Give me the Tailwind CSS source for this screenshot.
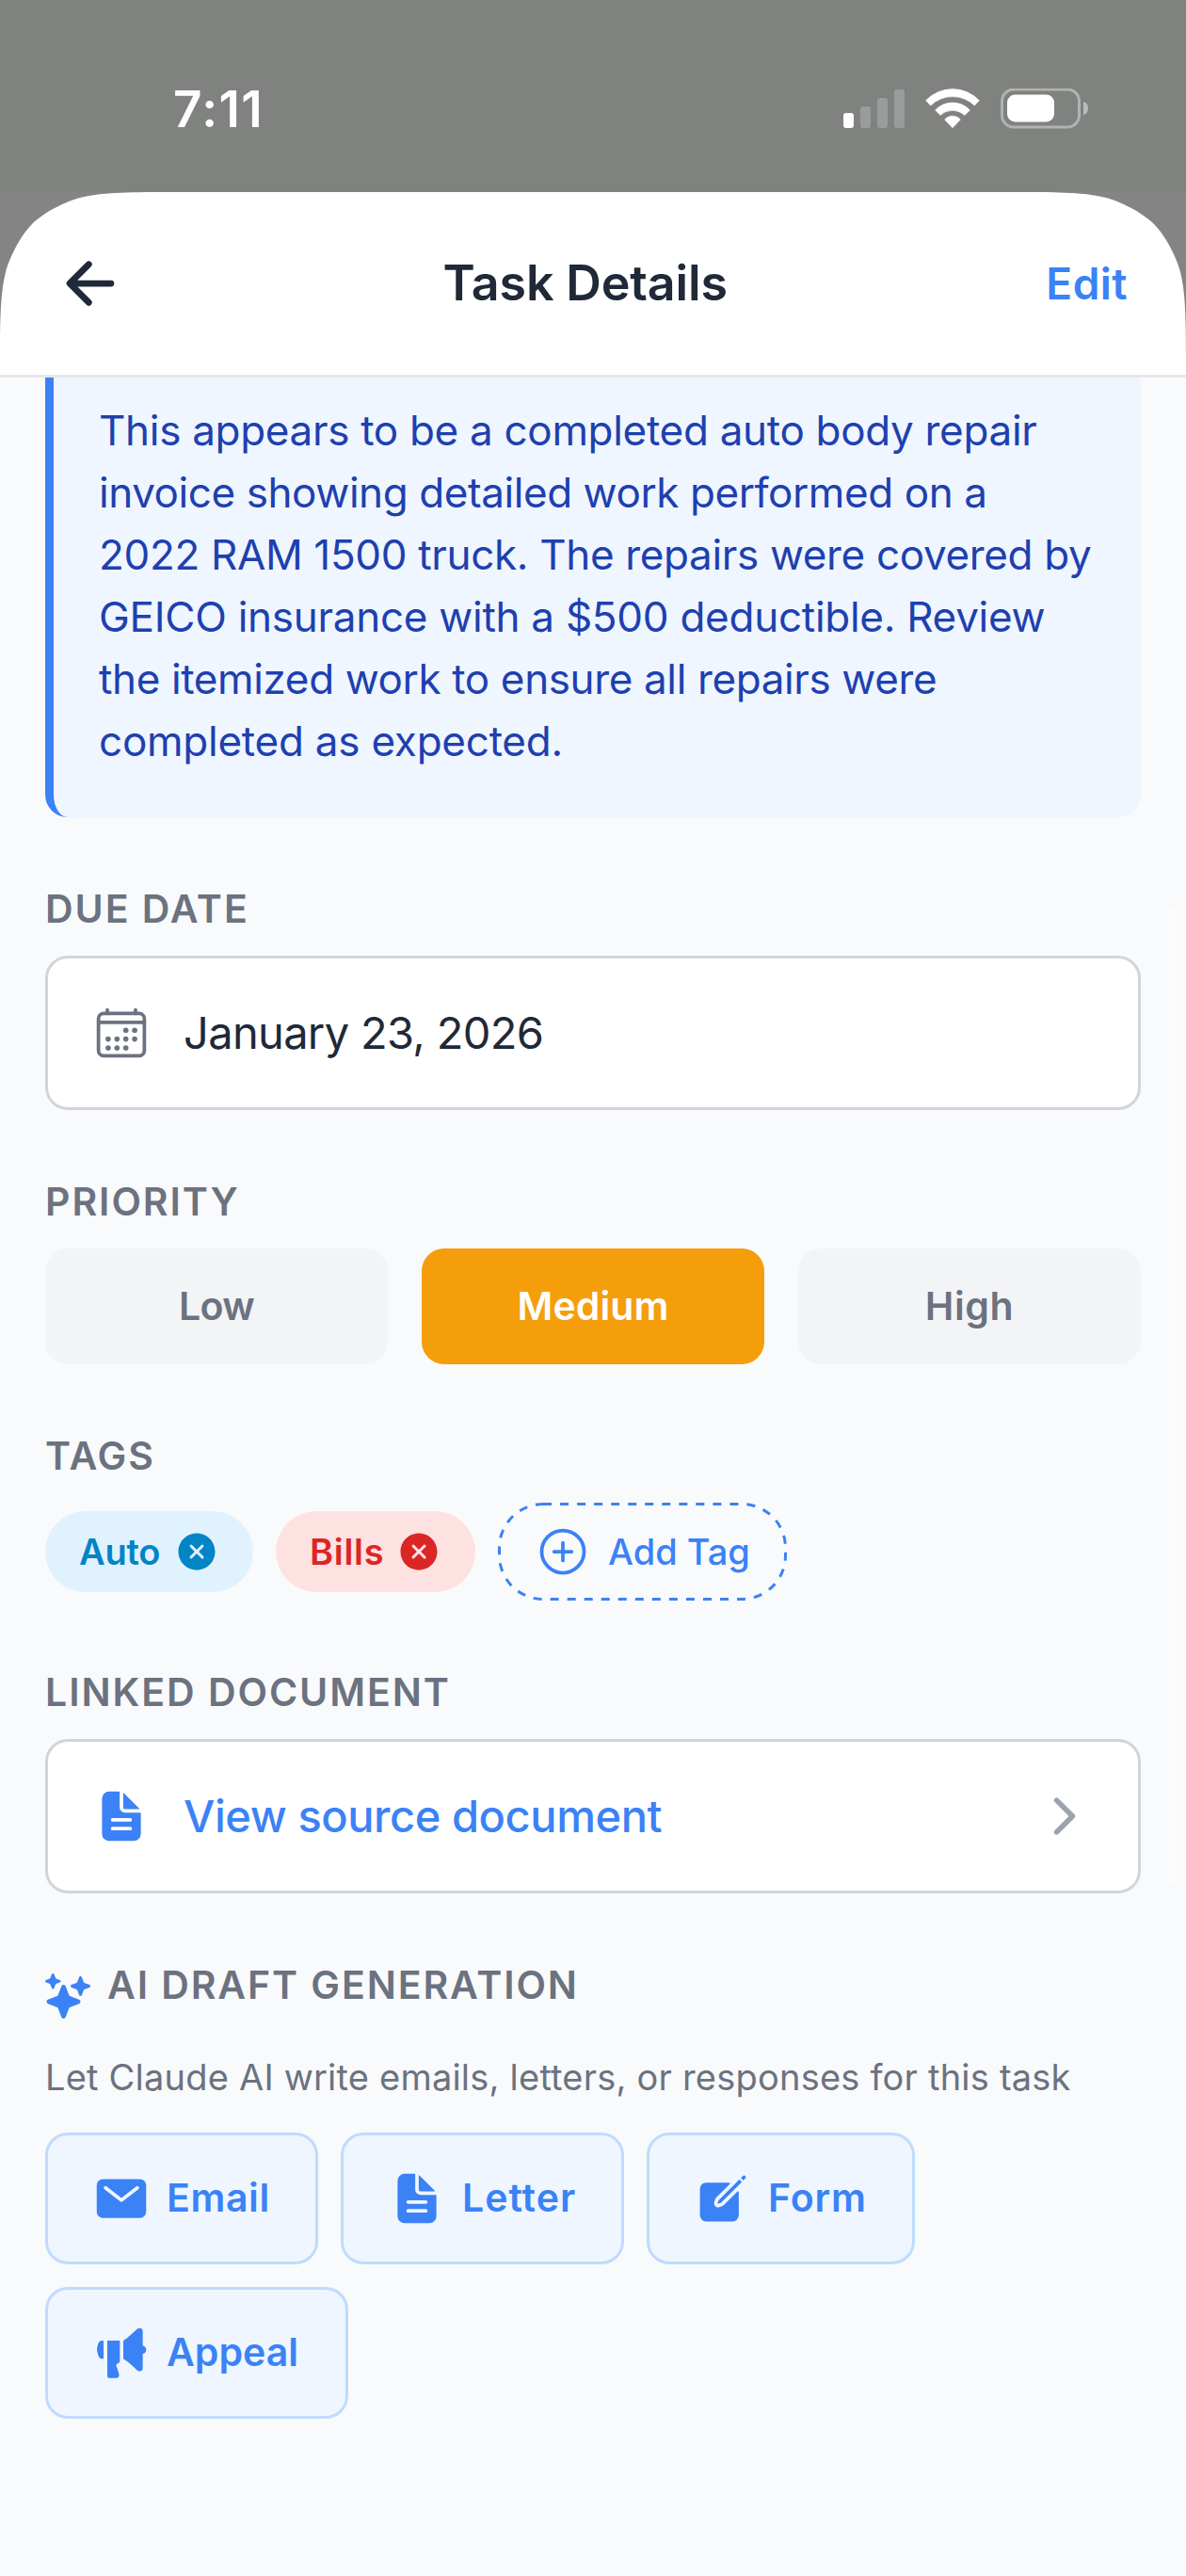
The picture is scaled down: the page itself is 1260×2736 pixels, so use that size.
<!DOCTYPE html>
<html lang="en">
<head>
  <meta charset="UTF-8" />
  <title>Task Details</title>
  <meta name="viewport" content="width=device-width, initial-scale=1.0" />
  <script src="https://cdn.jsdelivr.net/npm/@tailwindcss/browser@4"></script>
</head>
<body class="bg-[#858484] font-['Inter',sans-serif] text-[#1f2937]">

<main class="relative w-[1260px] h-[2736px] flex flex-col overflow-hidden">

  <!-- Status bar -->
  <div class="h-[204px] shrink-0 bg-[#80827f] pl-[184px] pr-[102px] pt-14 flex items-center justify-between">
    <span class="h-[88px] -mt-7 leading-[88px] text-[53px] font-semibold tracking-[1.4px] text-white">7:11</span>

    <div class="h-11 -mt-7 flex items-center">
      <svg class="w-[66px] h-11" viewBox="0 0 66 44">
        <rect x="0" y="26" width="11" height="16" rx="3" fill="#fff" />
        <rect x="18" y="19" width="11" height="23" rx="3" fill="#9a9c9b" />
        <rect x="36" y="10" width="11" height="32" rx="3" fill="#9a9c9b" />
        <rect x="54" y="1" width="11" height="41" rx="3" fill="#9a9c9b" />
      </svg>
      <svg class="w-15 h-11 ml-5" viewBox="289 39 180 132" fill="#fff" stroke="#fff" stroke-width="2" stroke-linejoin="round">
        <path d="M294 77A118 118 0 0 1 464 77L449 93A101 101 0 0 0 309 93Z" />
        <path d="M324 108A75 75 0 0 1 434 108L418 124A58 58 0 0 0 340 124Z" />
        <path d="M354 138A33 33 0 0 1 404 138L379 164Z" />
      </svg>
      <svg class="w-[95px] h-11 ml-[21px]" viewBox="0 0 95 44">
        <rect x="1.5" y="1" width="82" height="40" rx="12.5" fill="none" stroke="#b1b3b2" stroke-width="3" />
        <rect x="7" y="6.500" width="50" height="29" rx="8.5" fill="#fff" />
        <path d="M88 14c3.500.8 5 3.800 5 7s-1.500 6.200-5 7z" fill="#b9bbba" />
      </svg>
    </div>
  </div>

  <!-- Sheet header -->
  <header class="relative h-[197px] shrink-0 bg-white border-b-3 border-gray-200 px-15 flex items-center justify-between">
    <!-- Corners -->
    <svg class="absolute left-0 top-0 size-[174px]" viewBox="0 0 174 174" fill="#858484">
      <path d="M0 0H172C125 0 103 1.500 85 6C71 9.500 47 21 34 34C21 47 9.500 71 6 85C1.500 103 0 125 0 172Z" />
    </svg>
    <svg class="absolute right-0 top-0 size-[174px] -scale-x-100" viewBox="0 0 174 174" fill="#858484">
      <path d="M0 0H172C125 0 103 1.500 85 6C71 9.500 47 21 34 34C21 47 9.500 71 6 85C1.500 103 0 125 0 172Z" />
    </svg>

    <svg class="size-18" viewBox="0 0 512 512" fill="none" stroke="#1f2937" stroke-width="48" stroke-linecap="round" stroke-linejoin="round">
      <path d="M244 400L100 256l144-144M120 256h292" />
    </svg>
    <h1 class="text-[52px] font-semibold tracking-[-0.15px]">Task Details</h1>
    <button class="mr-0.5 text-[46px] font-semibold tracking-[0.45px] text-[#3b82f6]">Edit</button>
  </header>

  <!-- Content -->
  <div class="flex-1 bg-[#f9fafb] px-12 flex flex-col">

    <!-- Summary -->
    <p class="h-[467px] bg-[#eff6ff] border-l-9 border-[#3b82f6] rounded-b-3xl pl-12 pt-[23px] text-[44px] leading-[66px] text-[#1e40af] whitespace-nowrap">
      <span class="tracking-[-0.31px]">This appears to be a completed auto body repair</span><br />
      <span class="tracking-[-0.42px]">invoice showing detailed work performed on a</span><br />
      <span class="tracking-[-0.34px]">2022 RAM 1500 truck. The repairs were covered by</span><br />
      <span class="tracking-[-0.27px]">GEICO insurance with a $500 deductible. Review</span><br />
      <span class="tracking-[-0.37px]">the itemized work to ensure all repairs were</span><br />
      <span class="tracking-[-0.24px]">completed as expected.</span>
    </p>

    <!-- Due date -->
    <section class="mt-18">
      <h2 class="mb-6 text-[41px] leading-[51px] font-semibold tracking-[1.95px] text-[#6b7280]">DUE DATE</h2>
      <div class="h-[164px] bg-white border-3 border-[#d1d5db] rounded-3xl px-12 flex items-center">
        <svg class="size-15" viewBox="0 0 512 512" fill="#6b7280">
          <g fill="none" stroke="#6b7280" stroke-width="32" stroke-linecap="round" stroke-linejoin="round">
            <rect x="48" y="80" width="416" height="384" rx="48" />
            <path d="M128 48v32M384 48v32M464 160H48" />
          </g>
          <circle cx="296" cy="232" r="24" />
          <circle cx="376" cy="232" r="24" />
          <circle cx="136" cy="312" r="24" />
          <circle cx="216" cy="312" r="24" />
          <circle cx="296" cy="312" r="24" />
          <circle cx="376" cy="312" r="24" />
          <circle cx="136" cy="392" r="24" />
          <circle cx="216" cy="392" r="24" />
          <circle cx="296" cy="392" r="24" />
        </svg>
        <span class="ml-9 text-[47px] tracking-[-0.66px]">January 23, 2026</span>
      </div>
    </section>

    <!-- Priority -->
    <section class="mt-18">
      <h2 class="mb-6 text-[41px] leading-[51px] font-semibold tracking-[1.95px] text-[#6b7280]">PRIORITY</h2>
      <div class="grid grid-cols-3 gap-9 text-[41px] font-semibold">
        <button class="h-[123px] rounded-3xl bg-[#f3f4f6] text-[#6b7280] tracking-[-0.7px]">Low</button>
        <button class="h-[123px] rounded-3xl bg-[#f59e0b] text-white tracking-[0.1px]">Medium</button>
        <button class="h-[123px] rounded-3xl bg-[#f3f4f6] text-[#6b7280] tracking-[0.6px]">High</button>
      </div>
    </section>

    <!-- Tags -->
    <section class="mt-18">
      <h2 class="mb-6 text-[41px] leading-[51px] font-semibold tracking-[1.95px] text-[#6b7280]">TAGS</h2>
      <div class="h-26 flex items-center gap-6">
        <div class="w-[221px] h-[86px] rounded-[43px] bg-[#e0f2fe] text-[#0284c7] px-9 flex items-center justify-between">
          <span class="text-[38px] font-semibold tracking-[-0.2px]">Auto</span>
          <svg class="size-12" viewBox="0 0 512 512" fill="currentColor">
            <path d="M256 48C141.310 48 48 141.310 48 256s93.310 208 208 208 208-93.310 208-208S370.690 48 256 48zm75.310 260.690a16 16 0 11-22.620 22.620L256 278.630l-52.690 52.680a16 16 0 01-22.620-22.620L233.370 256l-52.680-52.690a16 16 0 0122.620-22.620L256 233.370l52.690-52.680a16 16 0 0122.620 22.620L278.630 256z" />
          </svg>
        </div>
        <div class="w-[212px] h-[86px] rounded-[43px] bg-[#fee2e2] text-[#dc2626] px-9 flex items-center justify-between">
          <span class="text-[38px] font-semibold tracking-[0.7px]">Bills</span>
          <svg class="size-12" viewBox="0 0 512 512" fill="currentColor">
            <path d="M256 48C141.310 48 48 141.310 48 256s93.310 208 208 208 208-93.310 208-208S370.690 48 256 48zm75.310 260.690a16 16 0 11-22.620 22.620L256 278.630l-52.690 52.680a16 16 0 01-22.620-22.620L233.370 256l-52.680-52.690a16 16 0 0122.620-22.620L256 233.370l52.690-52.680a16 16 0 0122.620 22.620L278.630 256z" />
          </svg>
        </div>
        <button class="relative w-[307px] h-26 pl-[39px] flex items-center text-[#3b82f6]">
          <svg class="absolute inset-0 w-[307px] h-26" viewBox="0 0 307 104" fill="none" stroke="currentColor" stroke-width="3">
            <rect x="1.500" y="1.500" width="304" height="101" rx="46.500" stroke-dasharray="9 9.040" />
          </svg>
          <svg class="size-15" viewBox="0 0 512 512" fill="none" stroke="currentColor" stroke-width="32" stroke-linecap="round" stroke-linejoin="round">
            <path stroke-miterlimit="10" d="M448 256c0-106-86-192-192-192S64 150 64 256s86 192 192 192 192-86 192-192z" />
            <path d="M256 176v160M336 256H176" />
          </svg>
          <span class="ml-[18px] text-[38px] font-medium">Add Tag</span>
        </button>
      </div>
    </section>

    <!-- Linked document -->
    <section class="mt-18">
      <h2 class="mb-6 text-[41px] leading-[51px] font-semibold tracking-[1.95px] text-[#6b7280]">LINKED DOCUMENT</h2>
      <div class="h-[164px] bg-white border-3 border-[#d1d5db] rounded-3xl px-12 flex items-center">
        <svg class="size-15" viewBox="0 0 512 512" fill="#3b82f6">
          <path d="M428 224H288a48 48 0 01-48-48V36a4 4 0 00-4-4h-92a64 64 0 00-64 64v320a64 64 0 0064 64h224a64 64 0 0064-64V228a4 4 0 00-4-4zm-92 160H176a16 16 0 010-32h160a16 16 0 010 32zm0-80H176a16 16 0 010-32h160a16 16 0 010 32z" />
          <path d="M419.220 188.590L275.410 44.780a2 2 0 00-3.410 1.410V176a16 16 0 0016 16h129.810a2 2 0 001.410-3.410z" />
        </svg>
        <span class="ml-9 flex-1 text-[47px] font-medium tracking-[-0.42px] text-[#3b82f6]">View source document</span>
        <svg class="size-15" viewBox="0 0 512 512" fill="none" stroke="#9ca3af" stroke-width="48" stroke-linecap="round" stroke-linejoin="round">
          <path d="M184 112l144 144-144 144" />
        </svg>
      </div>
    </section>

    <!-- AI drafts -->
    <section class="mt-18">
      <div class="flex items-center gap-[18px]">
        <svg class="size-12 -mt-0.5" viewBox="0 0 512 512" fill="#3b82f6">
          <path d="M208 512a24.840 24.840 0 01-23.340-16l-39.840-103.600a16.060 16.060 0 00-9.190-9.190L32 343.340a25 25 0 010-46.680l103.600-39.840a16.060 16.060 0 009.190-9.190L184.660 144a25 25 0 0146.680 0l39.840 103.600a16.060 16.060 0 009.190 9.190l103 39.630a25.490 25.490 0 0116.630 24.100 24.820 24.820 0 01-16 22.820l-103.600 39.840a16.060 16.060 0 00-9.190 9.190L231.340 496A24.840 24.840 0 01208 512z" />
          <path d="M88 176a14.670 14.670 0 01-13.690-9.400l-16.860-43.840a7.280 7.280 0 00-4.210-4.210L9.400 101.690a14.670 14.670 0 010-27.380l43.840-16.860a7.310 7.310 0 004.210-4.210L74.160 9.790A15 15 0 0186.230.110a14.670 14.670 0 0115.460 9.290l16.860 43.840a7.310 7.310 0 004.210 4.210l43.840 16.860a14.670 14.670 0 010 27.380l-43.840 16.860a7.280 7.280 0 00-4.210 4.210l-16.860 43.840A14.670 14.670 0 0188 176z" />
          <path d="M400 256a16 16 0 01-14.930-10.260l-22.840-59.370a8 8 0 00-4.600-4.600l-59.370-22.840a16 16 0 010-29.860l59.370-22.840a8 8 0 004.600-4.600l22.670-58.950a16.450 16.450 0 0113.170-10.570 16 16 0 0116.860 10.150l22.840 59.370a8 8 0 004.600 4.600l59.370 22.840a16 16 0 010 29.860l-59.370 22.840a8 8 0 00-4.600 4.600l-22.840 59.370A16 16 0 01400 256z" />
        </svg>
        <h2 class="mb-6 text-[41px] leading-[51px] font-semibold tracking-[1.9px] text-[#6b7280]">AI DRAFT GENERATION</h2>
      </div>
      <p class="mt-[18px] text-[38px] leading-[60px] tracking-[0.21px] text-[#6b7280] whitespace-nowrap">Let Claude AI write emails, letters, or responses for this task</p>

      <div class="mt-[29px] flex flex-wrap gap-6 text-[41px] font-semibold text-[#3b82f6]">
        <button class="w-[290px] h-[140px] pl-12 bg-[#eff6ff] border-3 border-[#bfdbfe] rounded-3xl flex items-center gap-[18px]">
          <svg class="size-15" viewBox="0 0 512 512" fill="currentColor">
            <path d="M424 80H88a56.060 56.060 0 00-56 56v240a56.060 56.060 0 0056 56h336a56.060 56.060 0 0056-56V136a56.060 56.060 0 00-56-56zm-14.180 92.630l-144 112a16 16 0 01-19.640 0l-144-112a16 16 0 1119.640-25.260L256 251.730l134.180-104.360a16 16 0 0119.640 25.260z" />
          </svg>
          <span class="tracking-[0.6px]">Email</span>
        </button>
        <button class="w-[301px] h-[140px] pl-12 bg-[#eff6ff] border-3 border-[#bfdbfe] rounded-3xl flex items-center gap-[18px]">
          <svg class="size-15" viewBox="0 0 512 512" fill="currentColor">
            <path d="M428 224H288a48 48 0 01-48-48V36a4 4 0 00-4-4h-92a64 64 0 00-64 64v320a64 64 0 0064 64h224a64 64 0 0064-64V228a4 4 0 00-4-4zm-92 160H176a16 16 0 010-32h160a16 16 0 010 32zm0-80H176a16 16 0 010-32h160a16 16 0 010 32z" />
            <path d="M419.220 188.590L275.410 44.780a2 2 0 00-3.410 1.410V176a16 16 0 0016 16h129.810a2 2 0 001.410-3.410z" />
          </svg>
          <span class="tracking-[1px]">Letter</span>
        </button>
        <button class="w-[285px] h-[140px] pl-12 bg-[#eff6ff] border-3 border-[#bfdbfe] rounded-3xl flex items-center gap-[18px]">
          <svg class="size-15" viewBox="0 0 512 512" fill="currentColor">
            <path d="M459.940 53.250a16.060 16.060 0 00-23.220-.560L424.350 65a8 8 0 000 11.310l11.340 11.320a8 8 0 0011.340 0l12.060-12c6.100-6.090 6.670-16.010.850-22.380zM399.340 90L218.820 270.200a9 9 0 00-2.310 3.930L208.160 299a3.910 3.910 0 004.860 4.860l24.850-8.350a9 9 0 003.930-2.310L422 112.660a9 9 0 000-12.660l-9.950-10a9 9 0 00-12.710 0z" />
            <path d="M386.340 193.660L264.450 315.790A41.080 41.080 0 01247.580 326l-25.900 8.670a35.920 35.920 0 01-44.330-44.330l8.670-25.900a41.080 41.080 0 0110.190-16.870L318.340 125.660A8 8 0 00312.690 112H104a56 56 0 00-56 56v240a56 56 0 0056 56h240a56 56 0 0056-56V199.310a8 8 0 00-13.660-5.650z" />
          </svg>
          <span class="tracking-[0.9px]">Form</span>
        </button>
        <button class="w-[322px] h-[140px] pl-12 bg-[#eff6ff] border-3 border-[#bfdbfe] rounded-3xl flex items-center gap-[18px]">
          <svg class="size-15" viewBox="0 0 180 180" fill="currentColor">
            <path d="M33 53q0-2-2-2h-3c-7 0-11 5-13 13-1 6-3 9-3 15s2 9 3 15c2 9 6 15 13 15h3q2 0 2-2z" />
            <path d="M45 51H85V116q0 5-5 7-5 1-6 5c-1 4 1 7 3 12l5 17c2 8-1 13-8 13H51q-6 0-6-6z" />
            <path d="M96 51C112 41 128 25 139 15c8-7 19-4 19 6V67c7 2 11 7 11 13s-4 11-11 13V139c0 10-11 13-19 6C128 134 112 119 96 109z" />
          </svg>
          <span>Appeal</span>
        </button>
      </div>
    </section>
  </div>

  <!-- Scroll indicator -->
  <div class="absolute left-[1242px] top-[962px] w-[9px] h-[1040px] rounded-full bg-[#fcfcfc]"></div>
</main>

</body>
</html>
